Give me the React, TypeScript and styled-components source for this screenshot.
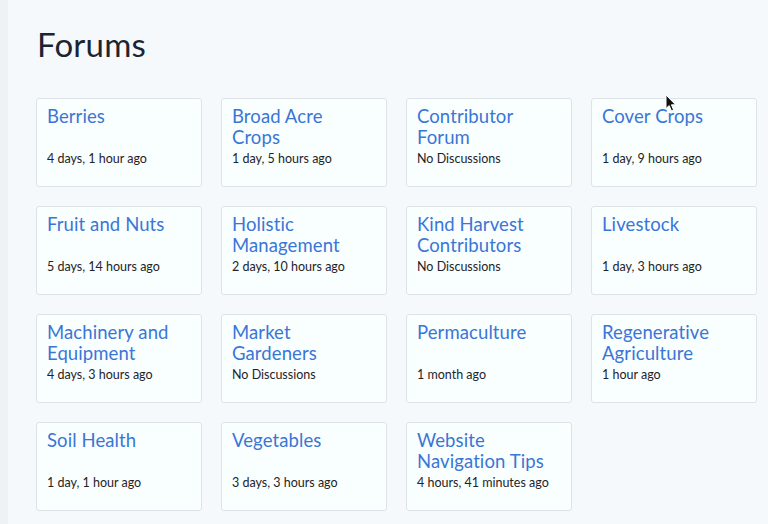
import React from "react";
import styled, { createGlobalStyle } from "styled-components";

const GlobalStyle = createGlobalStyle`
  html, body {
    margin: 0;
    padding: 0;
    background: #f6f9fb;
  }
  body {
    font-family: "Lato", "Open Sans", sans-serif;
    -webkit-font-smoothing: antialiased;
  }
`;

const Shell = styled.div`
  position: relative;
  min-height: 524px;
  box-sizing: border-box;
  border-left: 8px solid #eff2f4;
  background: #f6f9fb;
`;

const Main = styled.main`
  padding: 23px 0 0 28px;
`;

const Heading = styled.h1`
  margin: 0 0 32px 1px;
  font-family: "Lato", sans-serif;
  font-weight: 400;
  font-size: 33px;
  line-height: 43px;
  color: #1b2433;
  letter-spacing: 0.2px;
`;

const Grid = styled.div`
  display: grid;
  grid-template-columns: repeat(4, 166px);
  grid-auto-rows: 89px;
  column-gap: 19px;
  row-gap: 19px;
`;

const Card = styled.a`
  display: flex;
  flex-direction: column;
  box-sizing: border-box;
  padding: 7px 14px 0 10px;
  background: #f9feff;
  border: 1px solid #dde3e8;
  border-radius: 3px;
  text-decoration: none;
`;

const Title = styled.div`
  height: 42px;
  font-family: "Lato", sans-serif;
  font-size: 18.5px;
  line-height: 21px;
  color: #3976d6;
  letter-spacing: 0.1px;
`;

const Meta = styled.div`
  margin-top: 2px;
  font-family: "Lato", sans-serif;
  font-size: 12.5px;
  line-height: 18px;
  color: #1f2328;
`;

const Cursor = styled.svg`
  position: absolute;
  left: 657px;
  top: 94px;
  width: 12px;
  height: 18px;
`;

const forums: { title: string; meta: string }[] = [
  { title: "Berries", meta: "4 days, 1 hour ago" },
  { title: "Broad Acre Crops", meta: "1 day, 5 hours ago" },
  { title: "Contributor Forum", meta: "No Discussions" },
  { title: "Cover Crops", meta: "1 day, 9 hours ago" },
  { title: "Fruit and Nuts", meta: "5 days, 14 hours ago" },
  { title: "Holistic Management", meta: "2 days, 10 hours ago" },
  { title: "Kind Harvest Contributors", meta: "No Discussions" },
  { title: "Livestock", meta: "1 day, 3 hours ago" },
  { title: "Machinery and Equipment", meta: "4 days, 3 hours ago" },
  { title: "Market Gardeners", meta: "No Discussions" },
  { title: "Permaculture", meta: "1 month ago" },
  { title: "Regenerative Agriculture", meta: "1 hour ago" },
  { title: "Soil Health", meta: "1 day, 1 hour ago" },
  { title: "Vegetables", meta: "3 days, 3 hours ago" },
  { title: "Website Navigation Tips", meta: "4 hours, 41 minutes ago" },
];

export default function App() {
  return (
    <>
      <GlobalStyle />
      <Shell>
        <Main>
          <Heading>Forums</Heading>
          <Grid>
            {forums.map((f) => (
              <Card key={f.title} href="#">
                <Title>{f.title}</Title>
                <Meta>{f.meta}</Meta>
              </Card>
            ))}
          </Grid>
        </Main>
        <Cursor viewBox="0 0 12 18" aria-hidden="true">
          <path
            d="M1 1 L1 14.5 L4.2 11.6 L6.4 16.8 L8.6 15.9 L6.4 10.8 L10.6 10.8 Z"
            fill="#111"
            stroke="#fff"
            strokeWidth="1"
            strokeLinejoin="round"
          />
        </Cursor>
      </Shell>
    </>
  );
}
